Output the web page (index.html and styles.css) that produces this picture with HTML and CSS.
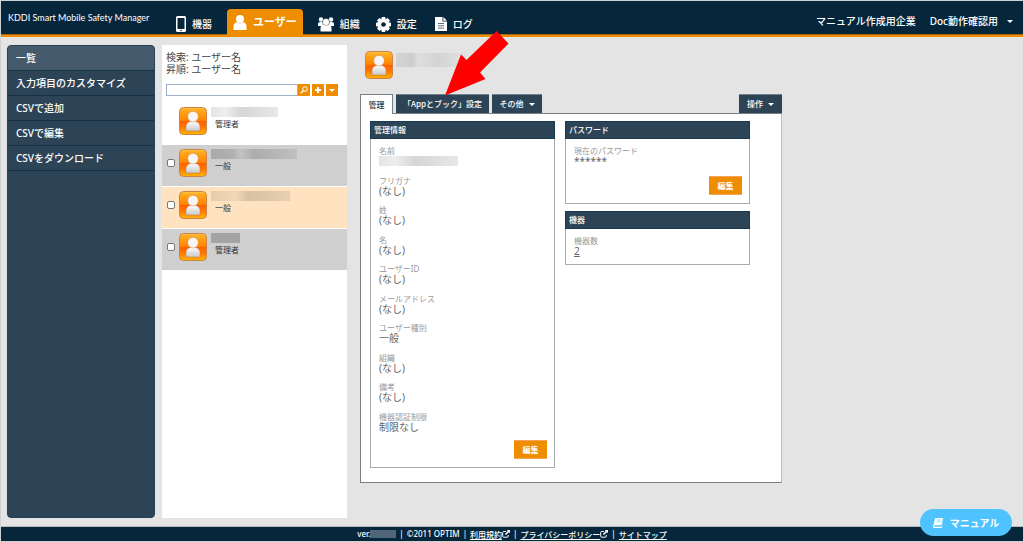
FILE: index.html
```html
<!DOCTYPE html>
<html lang="ja">
<head>
<meta charset="utf-8">
<title>KDDI Smart Mobile Safety Manager</title>
<link rel="stylesheet" href="styles.css">
</head>
<body>
<svg class="defs" aria-hidden="true">
  <defs>
    <linearGradient id="orange" x1="0" y1="0" x2="0" y2="1">
      <stop offset="0" stop-color="#ffc348"/><stop offset=".12" stop-color="#ffa91c"/>
      <stop offset=".48" stop-color="#ff8300"/><stop offset=".5" stop-color="#ff5f00"/>
      <stop offset=".72" stop-color="#ff7600"/><stop offset="1" stop-color="#ffb800"/>
    </linearGradient>
    <linearGradient id="silver" x1="0" y1="0" x2="0" y2="1">
      <stop offset="0" stop-color="#fff"/><stop offset="1" stop-color="#c9c9c9"/>
    </linearGradient>
    <symbol id="avatar" viewBox="0 0 28 28">
      <rect x=".5" y=".5" width="27" height="27" rx="4" fill="url(#orange)" stroke="#cf8246"/>
      <path d="M7 24V20c0-3.500 2.500-6 7-6s7 2.500 7 6v4z" fill="url(#silver)" stroke="#b86a34" stroke-width=".4"/>
      <circle cx="14" cy="9.600" r="5.300" fill="#f6f6f6" stroke="#d27a30" stroke-width=".4"/>
    </symbol>
    <symbol id="external" viewBox="0 0 8 8">
      <path d="M4 1.500H1.700Q.7 1.500.7 2.500V6.200Q.7 7.200 1.700 7.200H5.300Q6.300 7.200 6.300 6.200V5" fill="none" stroke="#fff"/>
      <path d="M4.700 0H8V3.300L6.900 2.200 4 5.100 2.900 4 5.800 1.100z" fill="#fff"/>
    </symbol>
  </defs>
</svg>
<div class="page">
  <header class="header">
    <div class="brand">KDDI Smart Mobile Safety Manager</div>
    <nav class="nav">
      <a class="nav-item" href="#"><svg width="10" height="16" viewBox="0 0 10 16"><rect width="10" height="16" rx="1.500" fill="#fff"/><rect x="1.500" y="2" width="7" height="11" fill="#06263b"/><circle cx="5" cy="14.500" r=".8" fill="#06263b"/></svg>機器</a>
      <a class="nav-item active" href="#"><svg width="14" height="15" viewBox="0 0 14 15" fill="#fff"><circle cx="7" cy="4" r="4"/><path d="M.5 15V11.500Q.5 7.500 4 7.300q3 2.200 6 0 3.500.2 3.500 4.200V15z"/></svg>ユーザー</a>
      <a class="nav-item" href="#"><svg width="16" height="15" viewBox="0 0 16 15" fill="#fff"><circle cx="3" cy="2.500" r="2.200"/><circle cx="13" cy="2.500" r="2.200"/><path d="M0 9V6.500Q.3 4.700 3 5h10q2.700-.3 3 1.500V9z"/><circle cx="8" cy="5" r="3.600" stroke="#06263b" stroke-width=".5"/><path d="M2.500 14.500V11q0-2.800 3-2.900 2.500 1.500 5 0 3 .1 3 2.900v3.500z"/></svg>組織</a>
      <a class="nav-item" href="#"><svg width="15" height="15" viewBox="0 0 16 16"><g fill="#fff"><circle cx="8" cy="8" r="6.200"/><path id="tooth" d="M6.200 0h3.600l.6 3H5.600zM6.200 16h3.600l.6-3H5.600z"/><use href="#tooth" transform="rotate(45 8 8)"/><use href="#tooth" transform="rotate(90 8 8)"/><use href="#tooth" transform="rotate(135 8 8)"/></g><circle cx="8" cy="8" r="2.500" fill="#06263b"/></svg>設定</a>
      <a class="nav-item log" href="#"><svg width="12" height="14" viewBox="0 0 12 14"><path d="M0 0h7.500v4.500H12V14H0z" fill="#fff"/><path d="M8.300 0 12 3.700H8.300z" fill="#fff"/><path d="M3 6.500h6M3 8.800h6M3 11.100h6" stroke="#31495b" stroke-width=".8"/></svg>ログ</a>
    </nav>
    <div class="account">
      <span>マニュアル作成用企業</span>
      <button class="plain" type="button">Doc動作確認用<i class="caret"></i></button>
    </div>
  </header>

  <div class="body">
    <nav class="side">
      <a class="current" href="#">一覧</a>
      <a href="#">入力項目のカスタマイズ</a>
      <a href="#">CSVで追加</a>
      <a href="#">CSVで編集</a>
      <a href="#">CSVをダウンロード</a>
    </nav>

    <section class="list">
      <div class="list-head">
        <p>検索: ユーザー名</p>
        <p>昇順: ユーザー名</p>
        <form class="search">
          <input type="text" aria-label="検索">
          <button type="button" aria-label="検索する"><svg width="8" height="8" viewBox="0 0 8 8" fill="none" stroke="#fff"><circle cx="5" cy="3" r="2.300"/><path d="M3.300 4.700.7 7.300" stroke-width="1.500"/></svg></button>
          <button type="button" aria-label="追加"><svg width="8" height="8" viewBox="0 0 8 8"><path d="M4 1v6M1 4h6" stroke="#fff" stroke-width="2"/></svg></button>
          <button type="button" aria-label="メニュー"><i class="caret"></i></button>
        </form>
      </div>
      <ul class="users">
        <li class="user first"><svg class="avatar"><use href="#avatar"/></svg><div><span class="mask light w67"></span><span class="role">管理者</span></div></li>
        <li class="user"><input type="checkbox" aria-label="ユーザー1を選択"><svg class="avatar"><use href="#avatar"/></svg><div><span class="mask w86"></span><span class="role">一般</span></div></li>
        <li class="user selected"><input type="checkbox" aria-label="ユーザー2を選択"><svg class="avatar"><use href="#avatar"/></svg><div><span class="mask peach w79"></span><span class="role">一般</span></div></li>
        <li class="user"><input type="checkbox" aria-label="ユーザー3を選択"><svg class="avatar"><use href="#avatar"/></svg><div><span class="mask dark w29"></span><span class="role">管理者</span></div></li>
      </ul>
    </section>

    <main class="main">
      <div class="title"><svg class="avatar"><use href="#avatar"/></svg><span class="title-mask"></span></div>
      <div class="tabs">
        <button class="tab on" type="button">管理</button>
        <div class="tab-wrap">
          <button class="tab" type="button">「Appとブック」設定</button>
          <svg class="arrow" width="64" height="65" viewBox="0 0 64 65"><path d="M51.500 0 63.500 12.500 35 41.500 40.500 48 0 64.500 16 23.500 21.500 29z" fill="#f00"/></svg>
        </div>
        <button class="tab" type="button">その他<i class="caret"></i></button>
        <button class="tab ops" type="button">操作<i class="caret"></i></button>
      </div>
      <div class="panel">
        <section class="card info">
          <h2>管理情報</h2>
          <dl>
            <div><dt>名前</dt><dd><span class="mask light w79"></span></dd></div>
            <div><dt>フリガナ</dt><dd>(なし)</dd></div>
            <div><dt>姓</dt><dd>(なし)</dd></div>
            <div><dt>名</dt><dd>(なし)</dd></div>
            <div><dt>ユーザーID</dt><dd>(なし)</dd></div>
            <div><dt>メールアドレス</dt><dd>(なし)</dd></div>
            <div><dt>ユーザー種別</dt><dd>一般</dd></div>
            <div><dt>組織</dt><dd>(なし)</dd></div>
            <div><dt>備考</dt><dd>(なし)</dd></div>
            <div><dt>機器認証制限</dt><dd>制限なし</dd></div>
          </dl>
          <button class="edit" type="button">編集</button>
        </section>
        <div class="column">
          <section class="card">
            <h2>パスワード</h2>
            <dl><div><dt>現在のパスワード</dt><dd>******</dd></div></dl>
            <button class="edit spaced" type="button">編集</button>
          </section>
          <section class="card">
            <h2>機器</h2>
            <dl><div><dt>機器数</dt><dd><a href="#">2</a></dd></div></dl>
          </section>
        </div>
      </div>
    </main>
  </div>

  <footer class="footer">
    <span>ver.</span><span class="version"></span><span>|</span><span>©2011 OPTIM</span><span>|</span>
    <a href="#">利用規約<svg width="8" height="8"><use href="#external"/></svg></a><span>|</span>
    <a href="#">プライバシーポリシー<svg width="8" height="8"><use href="#external"/></svg></a><span>|</span>
    <a href="#">サイトマップ</a>
  </footer>
  <button class="manual" type="button"><svg width="10" height="10" viewBox="0 0 10 10"><path d="M3 0h6Q10.200 0 9.900 1L8.300 7.200H2q-.8 0-.8.800T2 8.800h6.700L9.900 4v1L8.900 9.500Q8.700 10 8.200 10H1.500Q0 10 0 8.500L2 1Q2.300 0 3 0z" fill="#fff"/><path d="M4 2h4M3.500 3.700h4" stroke="#4fc3ff" stroke-width=".6"/></svg>マニュアル</button>
</div>
</body>
</html>
```
FILE: styles.css
```css
* { box-sizing: border-box; }
body, p, h2, dl, dd, ul { margin: 0; padding: 0; }
body { font: 10px/12px "Noto Sans", "Noto Sans CJK JP", sans-serif; color: #666; }
a { color: inherit; }
button, input { font: inherit; margin: 0; }
button { border: 0; padding: 0; color: #fff; }
svg { flex: none; }
.defs { position: absolute; width: 0; height: 0; }

.page { position: relative; display: flex; flex-direction: column; min-height: 100vh; border: 1px solid #cdd1d2; background: #e4e4e4; }

.header { display: flex; align-items: flex-end; height: 36px; background: #06263b; border-bottom: 2px solid #ee8d00; box-shadow: inset 0 -1px #a9661a; color: #fff; }
.brand { width: 167px; padding-left: 7px; align-self: center; white-space: nowrap; font: 9px/12px Lato, sans-serif; }
.nav { display: flex; align-items: flex-end; flex: 1; }
.nav-item { display: flex; align-items: center; gap: 6px; height: 22px; padding: 0 8px; font-weight: 500; text-decoration: none; white-space: nowrap; }
.nav-item.active { height: 26px; margin: 0 7px; padding: 0 6px; background: #ee8d00; border-radius: 4px 4px 0 0; font-size: 11px; font-weight: 700; }
.nav-item.log { padding-left: 10px; }
.account { display: flex; gap: 14px; padding: 0 10px 8px 0; white-space: nowrap; font-weight: 500; }
.plain { display: flex; align-items: center; gap: 9px; background: none; }
.caret { flex: none; width: 0; height: 0; border: 3px solid transparent; border-top-color: #fff; border-bottom: 0; }

.body { display: flex; flex: 1; padding: 8px 0 8px 6px; }
.side { flex: none; width: 148px; margin-right: 7px; background: #2d4457; border: 1px solid #24405a; border-radius: 4px; overflow: hidden; }
.side a { display: block; height: 25px; padding-left: 8px; border-bottom: 1px solid #123248; color: #fff; font-weight: 500; line-height: 24px; text-decoration: none; }
.side .current { background: #455b6b; }

.list { flex: none; width: 185px; background: #fff; }
.list-head { padding: 6px 4px 7px; color: #444; }
.search { display: flex; gap: 2px; height: 12px; margin-top: 9px; }
.search input { width: 132px; margin-right: -2px; padding: 0 2px; border: 1px solid #9fb2cc; border-radius: 0; background: #fff; }
.search button { display: grid; place-items: center; width: 12px; background: #ee8d00; }
.users { display: grid; gap: 1px; list-style: none; }
.user { display: grid; grid-template-columns: 8px 28px 1fr; column-gap: 4px; align-items: start; height: 41px; padding: 4px 0 0 5px; background: #cfcfcf; }
.user.first { background: #fff; padding-left: 17px; grid-template-columns: 28px 1fr; }
.user.selected { background: #ffe3c0; }
.user input { appearance: none; width: 8px; height: 8px; margin-top: 10px; border: 1px solid #777; border-radius: 2px; background: #fff; }
.avatar { display: block; width: 28px; height: 28px; }
.mask { display: block; height: 10px; background: linear-gradient(90deg, #aaa, #b0b0b0 25%, #c3c3c3 35%, #acacac 50%, #c0c0c0); }
.mask.light { background: linear-gradient(90deg, #e4e4e4, #eee 20%, #d6d6d6 45%, #dadada 60%, #e8e8e8); }
.mask.peach { background: linear-gradient(90deg, #e5cbaa, #f2d8b6 30%, #d7c1a4 48%, #e7cfb0); }
.mask.dark { background: #a4a4a4; }
.w67 { width: 67px; } .w86 { width: 86px; } .w79 { width: 79px; } .w29 { width: 29px; }
.role { display: block; padding-left: 4px; color: #333; font-size: 8px; line-height: 13px; }

.main { flex: 1; padding: 6px 0 28px 13px; }
.title { display: flex; gap: 3px; padding-left: 5px; }
.title-mask { width: 70px; height: 14px; margin-top: 2px; background: linear-gradient(90deg, #d3d3d3, #cecece 24%, #dedede 32%, #d4d4d4 60%, #e1e1e1); }
.tabs { display: flex; gap: 3px; width: 422px; margin-top: 15px; }
.tab { display: flex; align-items: center; justify-content: center; gap: 5px; min-width: 43px; height: 19px; padding: 0 7px; background: #2d4457; border-top: 1px solid #71808a; font: 500 8px/12px "Noto Sans CJK JP", sans-serif; white-space: nowrap; }
.tab.on { position: relative; min-width: 33px; height: 20px; margin-bottom: -1px; background: #fff; border: 1px solid #777f87; border-bottom: 0; color: #333; }
.tab-wrap { position: relative; }
.tab-wrap + .tab { min-width: 50px; }
.tab.ops { margin-left: auto; }
.arrow { position: absolute; left: 49px; bottom: 17px; }
.panel { display: flex; align-items: flex-start; gap: 10px; width: 422px; padding: 7px 9px 14px; background: #fff; border: 1px solid #777f87; border-right-color: #bbb; }
.column { display: grid; gap: 7px; }
.card { display: flex; flex-direction: column; width: 185px; padding-bottom: 8px; border: 1px solid #aaa; border-top: 0; }
.card h2 { margin: 0 -1px; padding-left: 3px; background: #2d4457; border: 1px solid #173a52; color: #fff; font-size: 8px; font-weight: 500; line-height: 16px; }
.card dl { padding: 6px 8px 0; }
.card dt { color: #999; font-size: 8px; line-height: 11px; }
.card dd { line-height: 10px; }
.info dl { display: flex; flex-direction: column; justify-content: space-between; min-height: 293px; }
.edit { align-self: flex-end; width: 33px; height: 19px; margin: 8px 7px 0; background: #ee8d00; border: 1px solid #f5a35a; border-width: 1px 0; font-size: 8px; font-weight: 700; }
.edit.spaced { margin-top: 10px; }

.footer { display: flex; justify-content: center; gap: 3px; height: 15px; border-top: 1px solid #b5b9bb; background: #06263b; color: #fff; font-size: 8px; font-weight: 500; line-height: 13px; white-space: nowrap; }
.footer a { display: flex; align-items: center; }
.version { width: 26px; height: 8px; margin: 3px 0 0 -3px; background: #506577; }
.manual { position: absolute; right: 11px; bottom: 5px; display: flex; align-items: center; justify-content: center; gap: 7px; width: 92px; height: 27px; border-radius: 14px; background: #4fc3ff; font-weight: 700; }
```
